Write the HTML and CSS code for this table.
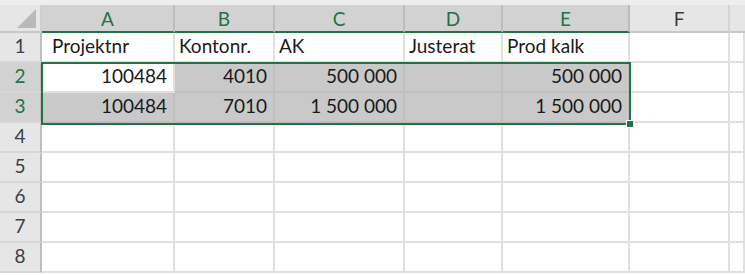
FILE: index.html
```html
<!DOCTYPE html>
<html lang="sv">
<head>
<meta charset="utf-8">
<title>Blad1</title>
<link rel="stylesheet" href="styles.css">
</head>
<body>
<div class="sheet">
  <div class="corner"><span class="tri"></span></div>
  <div class="ch sel">A</div>
  <div class="ch sel">B</div>
  <div class="ch sel">C</div>
  <div class="ch sel">D</div>
  <div class="ch sel">E</div>
  <div class="ch">F</div>
  <div class="ch last"></div>

  <div class="rh">1</div>
  <div class="c indent">Projektnr</div>
  <div class="c">Kontonr.</div>
  <div class="c">AK</div>
  <div class="c">Justerat</div>
  <div class="c">Prod kalk</div>
  <div class="c"></div>
  <div class="c"></div>

  <div class="rh sel">2</div>
  <div class="c num">100484</div>
  <div class="c num hl">4010</div>
  <div class="c num hl">500 000</div>
  <div class="c num hl"></div>
  <div class="c num hl">500 000</div>
  <div class="c"></div>
  <div class="c"></div>

  <div class="rh sel">3</div>
  <div class="c num hl">100484</div>
  <div class="c num hl">7010</div>
  <div class="c num hl">1 500 000</div>
  <div class="c num hl"></div>
  <div class="c num hl">1 500 000</div>
  <div class="c"></div>
  <div class="c"></div>

  <div class="rh">4</div><div class="c"></div><div class="c"></div><div class="c"></div><div class="c"></div><div class="c"></div><div class="c"></div><div class="c"></div>
  <div class="rh">5</div><div class="c"></div><div class="c"></div><div class="c"></div><div class="c"></div><div class="c"></div><div class="c"></div><div class="c"></div>
  <div class="rh">6</div><div class="c"></div><div class="c"></div><div class="c"></div><div class="c"></div><div class="c"></div><div class="c"></div><div class="c"></div>
  <div class="rh">7</div><div class="c"></div><div class="c"></div><div class="c"></div><div class="c"></div><div class="c"></div><div class="c"></div><div class="c"></div>
  <div class="rh">8</div><div class="c"></div><div class="c"></div><div class="c"></div><div class="c"></div><div class="c"></div><div class="c"></div><div class="c"></div>

  <div class="selection"><span class="handle"></span></div>
</div>
</body>
</html>
```

FILE: styles.css
```css
* { box-sizing: border-box; }
html, body {
  margin: 0;
  padding: 0;
  background: #ffffff;
}
body {
  font-family: Lato, "Liberation Sans", sans-serif;
  color: #1e1e1e;
  overflow: hidden;
}
.sheet {
  position: relative;
  display: grid;
  grid-template-columns: 42px 133px 100px 130px 98px 127px 100px 1fr;
  grid-template-rows: 28px repeat(8, 30px) 1fr;
  padding-top: 5px;
  width: 745px;
  height: 275px;
  background: #ffffff;
  box-shadow: inset 0 5px 0 #eeeeee;
}
.corner {
  position: relative;
  background: #e6e6e6;
  border-right: 2px solid #cfcfcf;
  border-bottom: 2px solid #c8c8c8;
}
.tri {
  position: absolute;
  right: 4px;
  bottom: 3px;
  width: 0;
  height: 0;
  border-left: 19px solid transparent;
  border-bottom: 19px solid #b9b9b9;
}
.ch {
  display: flex;
  align-items: center;
  justify-content: center;
  background: #e6e6e6;
  border-right: 2px solid #d3d3d3;
  border-bottom: 2px solid #c8c8c8;
  font-size: 19px;
  color: #3c3c3c;
  padding-top: 1px;
}
.ch.sel {
  background: #d2d2d2;
  color: #217346;
  border-right-color: #bcbcbc;
  border-bottom-color: #217346;
}
.ch.last { border-right: 0; }
.rh {
  display: flex;
  align-items: flex-end;
  justify-content: center;
  padding-bottom: 4px;
  background: #e6e6e6;
  border-right: 2px solid #bdbdbd;
  border-bottom: 2px solid #d6d6d6;
  font-size: 19px;
  color: #3a3f4a;
}
.rh.sel {
  background: #d2d2d2;
  color: #217346;
}
.c {
  display: flex;
  align-items: flex-end;
  padding: 0 5px 6px 4px;
  border-right: 2px solid #e0e0e0;
  border-bottom: 2px solid #e0e0e0;
  font-size: 19px;
  line-height: 1;
  white-space: nowrap;
  color: #1a1a1a;
}
.c.indent { padding-left: 10px; }
.c.num { justify-content: flex-end; padding-right: 6px; }
.c.hl {
  background: #c9c9c9;
  border-right-color: #bfbfbf;
  border-bottom-color: #bfbfbf;
}
.selection {
  position: absolute;
  left: 41px;
  top: 62px;
  width: 590px;
  height: 63px;
  border: 2px solid #217346;
  pointer-events: none;
}
.handle {
  position: absolute;
  right: -5px;
  bottom: -5px;
  width: 8px;
  height: 8px;
  background: #217346;
  border: 1px solid #ffffff;
}
```
